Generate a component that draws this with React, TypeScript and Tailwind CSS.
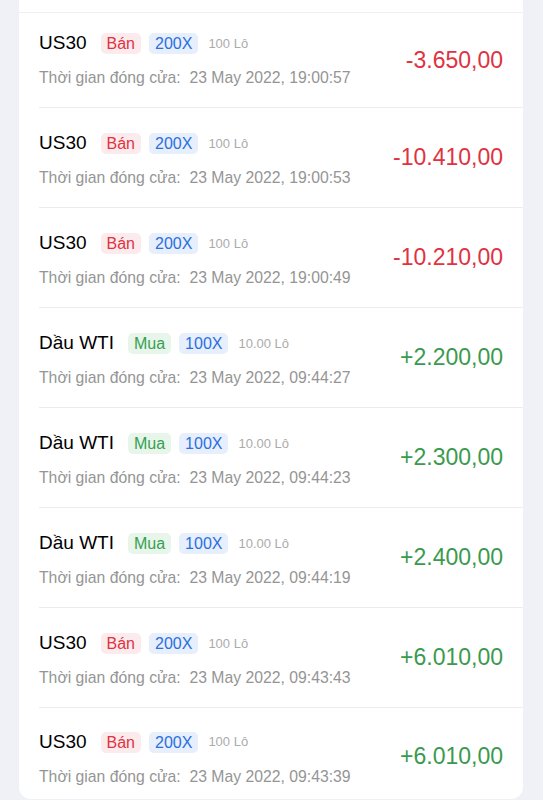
const trades = [
  { sym: "US30", side: "Bán", lev: "200X", lot: "100 Lô", time: "19:00:57", pnl: "-3.650,00" },
  { sym: "US30", side: "Bán", lev: "200X", lot: "100 Lô", time: "19:00:53", pnl: "-10.410,00" },
  { sym: "US30", side: "Bán", lev: "200X", lot: "100 Lô", time: "19:00:49", pnl: "-10.210,00" },
  { sym: "Dầu WTI", side: "Mua", lev: "100X", lot: "10.00 Lô", time: "09:44:27", pnl: "+2.200,00" },
  { sym: "Dầu WTI", side: "Mua", lev: "100X", lot: "10.00 Lô", time: "09:44:23", pnl: "+2.300,00" },
  { sym: "Dầu WTI", side: "Mua", lev: "100X", lot: "10.00 Lô", time: "09:44:19", pnl: "+2.400,00" },
  { sym: "US30", side: "Bán", lev: "200X", lot: "100 Lô", time: "09:43:43", pnl: "+6.010,00" },
  { sym: "US30", side: "Bán", lev: "200X", lot: "100 Lô", time: "09:43:39", pnl: "+6.010,00" },
];

export default function App() {
  return (
    <div className="min-h-screen h-[800px] overflow-hidden bg-[#f0f1f6] font-['Liberation_Sans',Arial,sans-serif]">
      <div className="ml-[19px] w-[504px] bg-white rounded-b-[12px]">
        <div className="h-[13px] border-b border-[#f0f0f2]" />
        {trades.map((t, i) => {
          const first = i === 0;
          const last = i === trades.length - 1;
          const sell = t.side === "Bán";
          const loss = t.pnl.startsWith("-");
          return (
            <div key={i} className={`ml-[20px] flex items-center pr-[20px] ${last ? "h-[91px] pt-[5px]" : "border-b border-[#ececef]"} ${first ? "h-[95px]" : ""} ${!first && !last ? "h-[100px]" : ""}`}>
              <div className={`flex-1 flex flex-col ${first ? "pt-[2px]" : "pt-[7px]"}`}>
                <div className="flex items-center h-[21px]">
                  <span className="text-[19px] text-black mr-[14px]">{t.sym}</span>
                  <span className={`h-[21px] px-[6px] rounded-[5px] text-[16px] leading-[21px] mr-[8px] ${sell ? "bg-[#fcebed] text-[#e0323f]" : "bg-[#e8f5eb] text-[#36a04f]"}`}>{t.side}</span>
                  <span className="h-[21px] px-[6px] rounded-[5px] text-[16px] leading-[21px] mr-[10px] bg-[#e7effc] text-[#2a6ee0]">{t.lev}</span>
                  <span className="text-[13px] text-[#ababab]">{t.lot}</span>
                </div>
                <div className="mt-[13px] text-[15.75px] leading-[22px] text-[#959595] whitespace-pre">{`Thời gian đóng cửa:  23 May 2022, ${t.time}`}</div>
              </div>
              <div className={`text-[23px] ${loss ? "text-[#e0323f]" : "text-[#3a9a4e]"}`}>{t.pnl}</div>
            </div>
          );
        })}
      </div>
    </div>
  );
}
